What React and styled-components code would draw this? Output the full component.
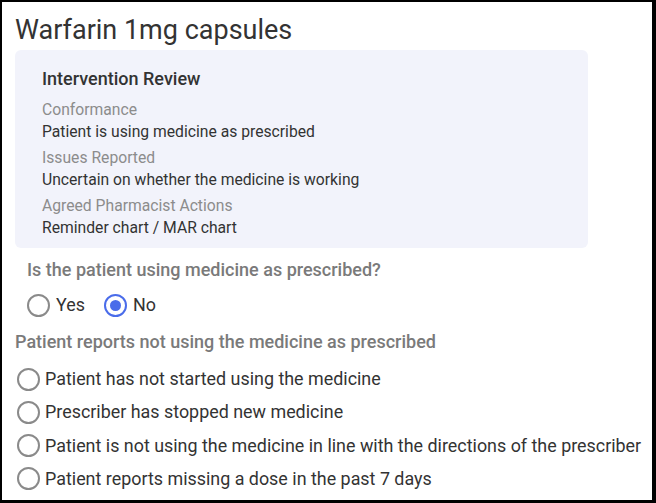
// Base imports
import React, { useState } from 'react';

// Style imports
import styled, { createGlobalStyle } from 'styled-components';

const GlobalStyle = createGlobalStyle`
  html, body {
    margin: 0;
    padding: 0;
    background: #fff;
  }

  body {
    font-family: Roboto, "Liberation Sans", Arial, sans-serif;
    color: #333;
  }

  * {
    box-sizing: border-box;
  }
`;

// Styled components
const Frame = styled.div`
  width: 656px;
  height: 503px;
  border-style: solid;
  border-color: #000;
  border-width: 2px 4px 3px 2px;
  padding: 12px 0 0 13px;
  overflow: hidden;
`;

const Title = styled.h1`
  margin: 0 0 4px;
  font-size: 27px;
  line-height: 32px;
  font-weight: 400;
  color: #333;
`;

const Panel = styled.section`
  width: 573px;
  height: 198px;
  background: #f2f3fb;
  border-radius: 6px;
  padding: 17px 27px 0;
`;

const PanelHeading = styled.h2`
  margin: 0 0 8px;
  font-size: 18px;
  line-height: 24px;
  font-weight: 500;
  color: #333;
`;

const Field = styled.div`
  & + & {
    margin-top: 4px;
  }
`;

const FieldLabel = styled.div`
  font-size: 15.7px;
  line-height: 22px;
  color: #8c8c8c;
`;

const FieldValue = styled.div`
  font-size: 15.7px;
  line-height: 22px;
  color: #333;
`;

const Question = styled.div`
  margin-top: ${p => p.$top}px;
  padding-left: ${p => p.$indent}px;
  font-size: 18px;
  line-height: 24px;
  font-weight: 500;
  color: #7a7a7a;
`;

const InlineGroup = styled.div`
  display: flex;
  gap: 19px;
  padding-left: 12px;
  margin-top: 11px;
`;

const StackGroup = styled.div`
  display: flex;
  flex-direction: column;
  gap: 9.3px;
  margin-top: 13px;
  padding-left: 2px;
`;

const Option = styled.label`
  display: flex;
  align-items: center;
  gap: ${p => p.$gap}px;
  font-size: 17.9px;
  line-height: 24px;
  color: #333;
  cursor: pointer;
  white-space: nowrap;
`;

const Circle = styled.span`
  flex: none;
  width: 23px;
  height: 23px;
  border-radius: 50%;
  border: 2px solid ${p => (p.$checked ? '#4a6cea' : '#8a8a8a')};
  display: flex;
  align-items: center;
  justify-content: center;

  &::after {
    content: '';
    width: 11px;
    height: 11px;
    border-radius: 50%;
    background: #4a6cea;
    display: ${p => (p.$checked ? 'block' : 'none')};
  }
`;

const fields = [
  { label: 'Conformance', value: 'Patient is using medicine as prescribed' },
  { label: 'Issues Reported', value: 'Uncertain on whether the medicine is working' },
  { label: 'Agreed Pharmacist Actions', value: 'Reminder chart / MAR chart' },
];

const reasons = [
  'Patient has not started using the medicine',
  'Prescriber has stopped new medicine',
  'Patient is not using the medicine in line with the directions of the prescriber',
  'Patient reports missing a dose in the past 7 days',
];

const App = () => {
  const [asPrescribed, setAsPrescribed] = useState('no');
  const [reason, setReason] = useState(null);

  return (
    <>
      <GlobalStyle />
      <Frame>
        <Title>Warfarin 1mg capsules</Title>

        <Panel>
          <PanelHeading>Intervention Review</PanelHeading>
          {fields.map(f => (
            <Field key={f.label}>
              <FieldLabel>{f.label}</FieldLabel>
              <FieldValue>{f.value}</FieldValue>
            </Field>
          ))}
        </Panel>

        <Question $top={10} $indent={12}>Is the patient using medicine as prescribed?</Question>
        <InlineGroup>
          {['yes', 'no'].map(v => (
            <Option key={v} $gap={6} onClick={() => setAsPrescribed(v)}>
              <Circle $checked={asPrescribed === v} />
              {v === 'yes' ? 'Yes' : 'No'}
            </Option>
          ))}
        </InlineGroup>

        <Question $top={13} $indent={0}>Patient reports not using the medicine as prescribed</Question>
        <StackGroup>
          {reasons.map(r => (
            <Option key={r} $gap={5} onClick={() => setReason(r)}>
              <Circle $checked={reason === r} />
              {r}
            </Option>
          ))}
        </StackGroup>
      </Frame>
    </>
  );
};

export default App;
